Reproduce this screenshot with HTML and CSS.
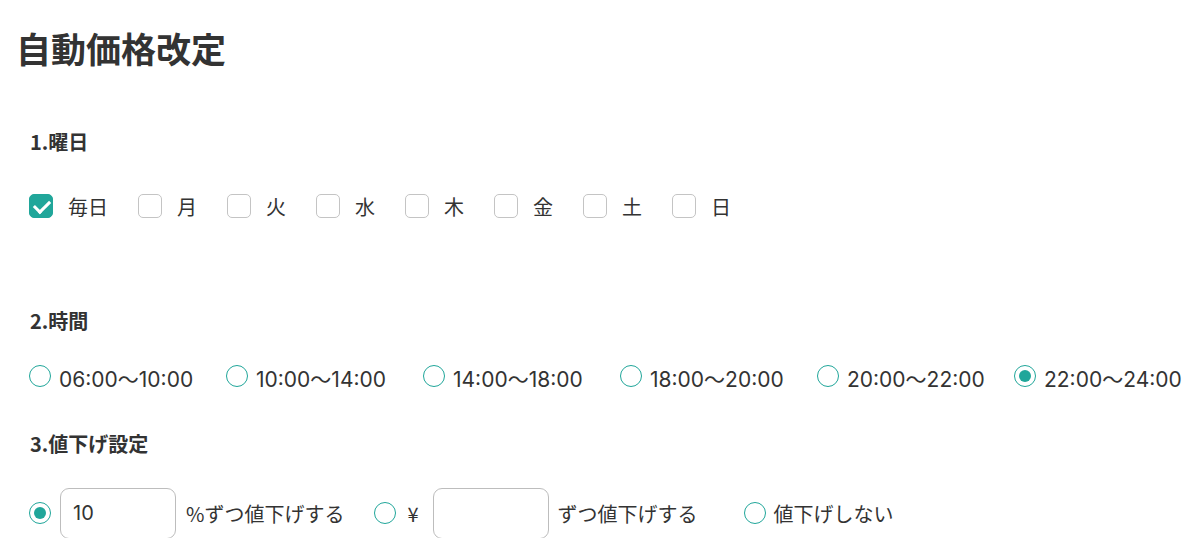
FILE: index.html
```html
<!DOCTYPE html>
<html lang="ja">

<head>
    <meta charset="UTF-8">
    <meta name="viewport" content="width=device-width, initial-scale=1.0">
    <title>自動価格改定</title>
    <link rel="stylesheet" href="styles.css">
</head>

<body>

    <h1 class="page-title">自動価格改定</h1>

    <form class="settings">
        <!-- 1. days of the week -->
        <section class="block block-days">
            <h2>1.曜日</h2>
            <div class="days">
                <label class="day"><input type="checkbox" checked><span>毎日</span></label>
                <label class="day"><input type="checkbox"><span>月</span></label>
                <label class="day"><input type="checkbox"><span>火</span></label>
                <label class="day"><input type="checkbox"><span>水</span></label>
                <label class="day"><input type="checkbox"><span>木</span></label>
                <label class="day"><input type="checkbox"><span>金</span></label>
                <label class="day"><input type="checkbox"><span>土</span></label>
                <label class="day"><input type="checkbox"><span>日</span></label>
            </div>
        </section>

        <!-- 2. time range -->
        <section class="block block-time">
            <h2>2.時間</h2>
            <div class="times">
                <label class="time"><input type="radio" name="time"><span>06:00〜10:00</span></label>
                <label class="time"><input type="radio" name="time"><span>10:00〜14:00</span></label>
                <label class="time"><input type="radio" name="time"><span>14:00〜18:00</span></label>
                <label class="time"><input type="radio" name="time"><span>18:00〜20:00</span></label>
                <label class="time"><input type="radio" name="time"><span>20:00〜22:00</span></label>
                <label class="time"><input type="radio" name="time" checked><span>22:00〜24:00</span></label>
            </div>
        </section>

        <!-- 3. discount -->
        <section class="block block-discount">
            <h2>3.値下げ設定</h2>
            <div class="discount">
                <label class="option option-percent">
                    <input type="radio" name="discount" checked>
                    <input class="amount" type="text" value="10">
                    <span>%ずつ値下げする</span>
                </label>
                <label class="option option-yen">
                    <input type="radio" name="discount">
                    <span class="yen">¥</span>
                    <input class="amount" type="text">
                    <span>ずつ値下げする</span>
                </label>
                <label class="option option-none">
                    <input type="radio" name="discount">
                    <span>値下げしない</span>
                </label>
            </div>
        </section>
    </form>

</body>

</html>
```

FILE: styles.css
```css
body {
    font-family: "Noto Sans CJK JP", "Noto Sans", sans-serif;
    background-color: #fff;
    color: #333;
    margin: 0;
    width: 1200px;
}

.page-title {
    font-size: 35px;
    line-height: 48px;
    font-weight: bold;
    color: #333;
    margin: 24px 0 0 16px;
}

.settings {
    padding-left: 29px;
}

.block h2 {
    font-size: 20px;
    line-height: 24px;
    font-weight: bold;
    color: #333;
    margin: 0;
    padding-left: 1px;
}

.block-days {
    margin-top: 58px;
}

.block-time {
    margin-top: 88px;
}

.block-discount {
    margin-top: 41px;
}

/* custom checkbox / radio look */
input[type="checkbox"],
input[type="radio"] {
    appearance: none;
    -webkit-appearance: none;
    margin: 0;
    flex-shrink: 0;
    position: relative;
    background: #fff;
}

input[type="checkbox"] {
    width: 24px;
    height: 24px;
    border: 1px solid #c4c4c4;
    border-radius: 5px;
}

input[type="checkbox"]:checked {
    background-color: #20a69a;
    border-color: #20a69a;
}

input[type="checkbox"]:checked::after {
    content: "";
    position: absolute;
    left: 7px;
    top: 2px;
    width: 7px;
    height: 13px;
    border: solid #fff;
    border-width: 0 3px 3px 0;
    transform: rotate(45deg);
}

input[type="radio"] {
    width: 22px;
    height: 22px;
    border: 1.5px solid #20a69a;
    border-radius: 50%;
}

input[type="radio"]:checked::after {
    content: "";
    position: absolute;
    left: 3.5px;
    top: 3.5px;
    width: 12px;
    height: 12px;
    border-radius: 50%;
    background: #20a69a;
}

/* 1. days */
.days {
    display: flex;
    align-items: center;
    height: 30px;
    margin-top: 37px;
}

.day {
    display: flex;
    align-items: center;
    margin-right: 30px;
    font-size: 20px;
}

.day span {
    margin-left: 15px;
}

/* 2. time */
.times {
    display: flex;
    align-items: center;
    height: 30px;
    margin-top: 28px;
}

.time {
    display: flex;
    align-items: center;
    flex: none;
    width: 197px;
    font-family: Inter, "Noto Sans CJK JP", sans-serif;
    font-size: 21px;
}

.time span {
    margin-left: 8px;
    padding-top: 3px;
}

/* 3. discount */
.discount {
    display: flex;
    align-items: center;
    height: 50px;
    margin-top: 32px;
    font-size: 20px;
}

.option {
    display: flex;
    align-items: center;
}

.amount {
    box-sizing: border-box;
    width: 116px;
    height: 51px;
    border: 1px solid #bdbdbd;
    border-radius: 9px;
    padding: 0 12px;
    font-family: Inter, "Noto Sans CJK JP", sans-serif;
    font-size: 20px;
    color: #333;
}

.option-percent .amount {
    margin: 0 10px 0 9px;
}

.option-yen {
    margin-left: 30px;
}

.option-yen .yen {
    margin: 0 14px 0 11px;
}

.option-yen .amount {
    margin-right: 9px;
}

.option-none {
    margin-left: 46px;
}

.option-none span {
    margin-left: 8px;
}
```
